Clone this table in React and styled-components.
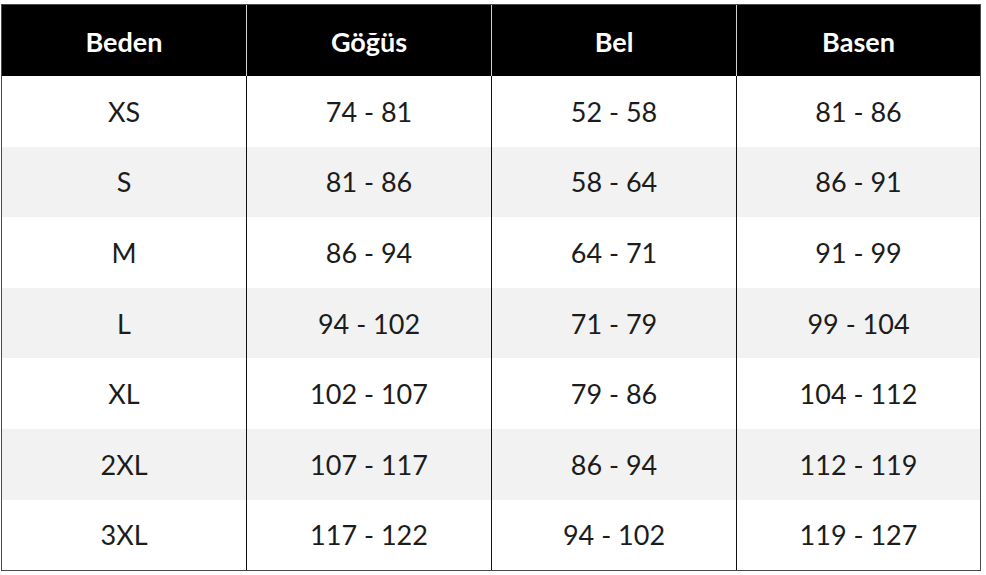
import styled, { createGlobalStyle } from "styled-components";

const GlobalStyle = createGlobalStyle`
    html, body {
        margin: 0;
        padding: 0;
        background: #ffffff;
    }
    body {
        font-family: Lato, "Open Sans", "Liberation Sans", sans-serif;
    }
`;

const Pagina = styled.main`
    padding: 4px 0 0 1px;
    width: 986px;
    height: 575px;
    box-sizing: border-box;
`;

const Tabela = styled.div`
    width: 980px;
    border: 1px solid #4a4a4a;
    box-sizing: border-box;
    display: flex;
    flex-direction: column;
`;

const Linha = styled.div`
    display: grid;
    grid-template-columns: 244px 245px 245px 1fr;
    height: ${(props) => (props.$cabecalho ? "71px" : "70.6px")};
    background-color: ${(props) =>
        props.$cabecalho ? "#000000" : props.$cinza ? "#f2f2f2" : "#ffffff"};
`;

const Titulo = styled.div`
    display: flex;
    align-items: center;
    justify-content: center;
    color: #ffffff;
    font-weight: 700;
    font-size: 27px;
    padding-top: 1px;
    & + & {
        border-left: 1px solid #cfcfcf;
    }
`;

const Celula = styled.div`
    display: flex;
    align-items: center;
    justify-content: center;
    color: #1c1c1c;
    font-size: 27px;
    & + & {
        border-left: 1px solid #111111;
    }
`;

const colunas = ["Beden", "Göğüs", "Bel", "Basen"];

const medidas = [
    ["XS", "74 - 81", "52 - 58", "81 - 86"],
    ["S", "81 - 86", "58 - 64", "86 - 91"],
    ["M", "86 - 94", "64 - 71", "91 - 99"],
    ["L", "94 - 102", "71 - 79", "99 - 104"],
    ["XL", "102 - 107", "79 - 86", "104 - 112"],
    ["2XL", "107 - 117", "86 - 94", "112 - 119"],
    ["3XL", "117 - 122", "94 - 102", "119 - 127"],
];

const App = () => {
    return (
        <>
            <GlobalStyle />
            <Pagina>
                <Tabela>
                    <Linha $cabecalho>
                        {colunas.map((coluna) => (
                            <Titulo key={coluna}>{coluna}</Titulo>
                        ))}
                    </Linha>
                    {medidas.map((linha, i) => (
                        <Linha key={linha[0]} $cinza={i % 2 === 1}>
                            {linha.map((valor, j) => (
                                <Celula key={j}>{valor}</Celula>
                            ))}
                        </Linha>
                    ))}
                </Tabela>
            </Pagina>
        </>
    );
};

export default App;
